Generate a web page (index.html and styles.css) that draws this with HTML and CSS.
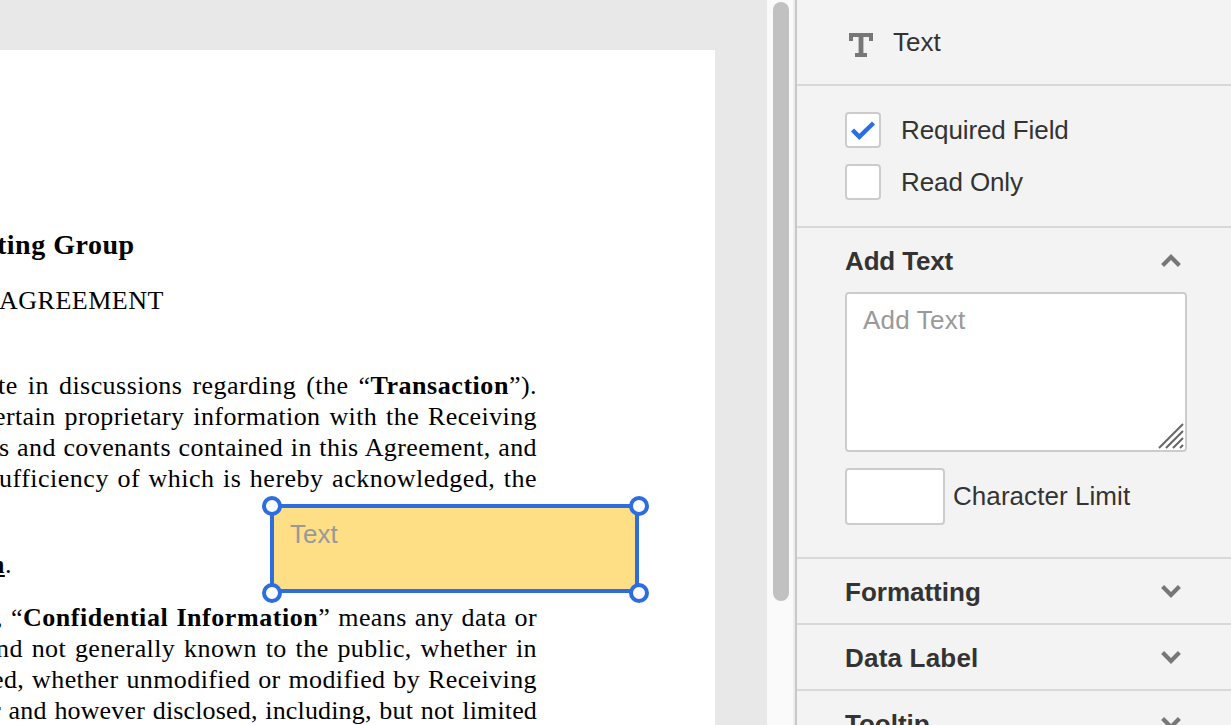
FILE: index.html
```html
<!DOCTYPE html>
<html lang="en">
<head>
<meta charset="utf-8">
<title>Text field properties</title>
<link rel="stylesheet" href="styles.css">
</head>
<body>
<div class="app">
  <main class="document">
    <article class="page">
      <h1 class="company">ting Group</h1>
      <h2 class="title">AGREEMENT</h2>
      <div class="para recitals">
        <div class="line l1">te in discussions regarding (the “<b>Transaction</b>”).</div>
        <div class="line l2">ertain proprietary information with the Receiving</div>
        <div class="line l3">s and covenants contained in this Agreement, and</div>
        <div class="line l4">ufficiency of which is hereby acknowledged, the</div>
      </div>
      <div class="section"><b><u>n</u></b>.</div>
      <div class="para definitions">
        <div class="line d1">, “<b>Confidential Information</b>” means any data or</div>
        <div class="line d2">nd not generally known to the public, whether in</div>
        <div class="line d3">ed, whether unmodified or modified by Receiving</div>
        <div class="line d4">r and however disclosed, including, but not limited</div>
      </div>
    </article>
    <div class="field">
      <span class="field-label">Text</span>
      <i class="handle nw"></i><i class="handle ne"></i><i class="handle sw"></i><i class="handle se"></i>
    </div>
  </main>
  <div class="scrollbar"><div class="thumb"></div></div>
  <aside class="panel">
    <header class="panel-head">
      <svg class="type-icon" width="24" height="24" viewBox="0 0 24 24"><path d="M0 0H24V8H20V4H14.4V20H18V24H6V20H9.6V4H4V8H0Z" fill="#777"/></svg>
      <span>Text</span>
    </header>
    <section class="options">
      <label class="option"><span class="box"><svg width="32" height="32" viewBox="0 0 32 32"><path d="M5.5 16L12.3 22.8L26.5 9" fill="none" stroke="#2b6de3" stroke-width="4.4"/></svg></span>Required Field</label>
      <label class="option"><span class="box"></span>Read Only</label>
    </section>
    <section class="add-text">
      <div class="row"><h3>Add Text</h3><svg class="chevron" width="20" height="13" viewBox="0 0 20 13"><path d="M1.6 11.4L10 3L18.4 11.4" fill="none" stroke="#777" stroke-width="4.2"/></svg></div>
      <div class="area">
        <textarea class="input" placeholder="Add Text"></textarea>
        <svg class="grip" width="26" height="26" viewBox="0 0 26 26"><path d="M1 25L25 1M8 25L25 8M15 25L25 15M22 25L25 22" fill="none" stroke="#666" stroke-width="2"/></svg>
      </div>
      <label class="limit"><input class="input" type="text">Character Limit</label>
    </section>
    <section class="collapsed"><h3>Formatting</h3><svg class="chevron" width="20" height="13" viewBox="0 0 20 13"><path d="M1.6 1.6L10 10L18.4 1.6" fill="none" stroke="#777" stroke-width="4.2"/></svg></section>
    <section class="collapsed"><h3 class="wide">Data Label</h3><svg class="chevron" width="20" height="13" viewBox="0 0 20 13"><path d="M1.6 1.6L10 10L18.4 1.6" fill="none" stroke="#777" stroke-width="4.2"/></svg></section>
    <section class="collapsed"><h3>Tooltip</h3><svg class="chevron" width="20" height="13" viewBox="0 0 20 13"><path d="M1.6 1.6L10 10L18.4 1.6" fill="none" stroke="#777" stroke-width="4.2"/></svg></section>
  </aside>
</div>
</body>
</html>
```
FILE: styles.css
```css
* { box-sizing: border-box; }
body { margin: 0; overflow: hidden; }
h1, h2, h3 { margin: 0; }
.app {
  display: grid;
  grid-template-columns: 766px 29px 436px;
  width: 1231px;
  height: 725px;
  overflow: hidden;
  font: 26px/30px "Liberation Sans", Arial, sans-serif;
  color: #333;
}

.document { position: relative; overflow: hidden; height: 725px; padding-top: 50px; background: #e8e8e8; }
.page {
  width: 715px;
  height: 675px;
  padding-top: 179px;
  overflow: hidden;
  background: #fff;
  color: #000;
  font: 26px/31px "Liberation Serif", "Times New Roman", serif;
  letter-spacing: 0.4px;
  white-space: nowrap;
}
.company { margin-left: -3px; font-size: 28px; line-height: 31px; letter-spacing: 0.5px; }
.title { margin: 25px 0 0 -1px; font-size: 26px; line-height: 31px; font-weight: 400; letter-spacing: 0.5px; }
.para { width: 537px; }
.recitals { margin-top: 54px; }
.line { text-align: justify; text-align-last: justify; white-space: normal; height: 31px; }
.line b { letter-spacing: 0.55px; }
.l1 { margin-left: -2px; letter-spacing: 0.45px; }
.l2 { margin-left: -6px; }
.l3 { margin-left: -1px; }
.l4 { margin-left: -1px; letter-spacing: 0.5px; }
.section { margin: 55px 0 0 -10px; }
.section u { text-decoration-thickness: 2px; text-underline-offset: 2px; }
.definitions { margin-top: 22px; }
.d1 { margin-left: -4px; }
.d2 { margin-left: -4px; }
.d3 { margin-left: -8px; }
.d4 { margin-left: -8px; letter-spacing: 0.15px; }

.field {
  position: absolute;
  left: 270px;
  top: 504px;
  width: 369px;
  height: 89px;
  padding: 11px 16px;
  border: 4px solid #2d6ddf;
  background: #ffdf85;
}
.field-label { color: #999; }
.handle {
  position: absolute;
  width: 20px;
  height: 20px;
  border: 4px solid #2d6ddf;
  border-radius: 50%;
  background: #fff;
}
.nw { left: -12px; top: -12px; }
.ne { right: -14px; top: -12px; }
.sw { left: -12px; bottom: -14px; }
.se { right: -14px; bottom: -14px; }

.scrollbar { padding: 2px 6px 0; background: #fafafa; border-left: 1px solid #e8e8e8; border-right: 2px solid #ededed; }
.thumb { width: 16px; height: 599px; border-radius: 8px; background: #c1c1c1; }

.panel { height: 725px; overflow: hidden; border-left: 2px solid #c8c8c8; background: #f3f3f3; }
.panel > * { border-bottom: 2px solid #d8d8d8; padding-left: 48px; }
.panel-head { display: flex; height: 86px; padding-top: 27px; padding-left: 52px; gap: 20px; }
.type-icon { margin-top: 6px; }
.options { display: grid; align-content: start; gap: 16px; height: 142px; padding-top: 26px; letter-spacing: -0.1px; }
.option { display: flex; align-items: center; gap: 20px; height: 36px; }
.box { width: 36px; height: 36px; border: 2px solid #ccc; border-radius: 4px; background: #fff; }
.box svg { display: block; }
.add-text { height: 331px; padding-top: 18px; }
h3 { font: bold 26px/30px "Liberation Sans", Arial, sans-serif; }
.wide { letter-spacing: 0.2px; }
.row, .collapsed { display: flex; justify-content: space-between; padding-right: 50px; }
.row h3 { letter-spacing: -0.15px; }
.chevron { margin-top: 8px; }
.area { position: relative; width: 342px; height: 160px; margin-top: 16px; }
.input { display: block; margin: 0; border: 2px solid #ccc; border-radius: 4px; background: #fff; font: inherit; }
.area .input { width: 342px; height: 160px; padding: 11px 16px; resize: none; letter-spacing: 0.2px; }
.input::placeholder { color: #999; opacity: 1; }
.grip { position: absolute; right: 3px; bottom: 3px; }
.limit { display: flex; gap: 8px; margin-top: 16px; line-height: 56px; letter-spacing: 0.06px; }
.limit .input { width: 100px; height: 57px; }
.collapsed { height: 66px; padding-top: 18px; }
```
